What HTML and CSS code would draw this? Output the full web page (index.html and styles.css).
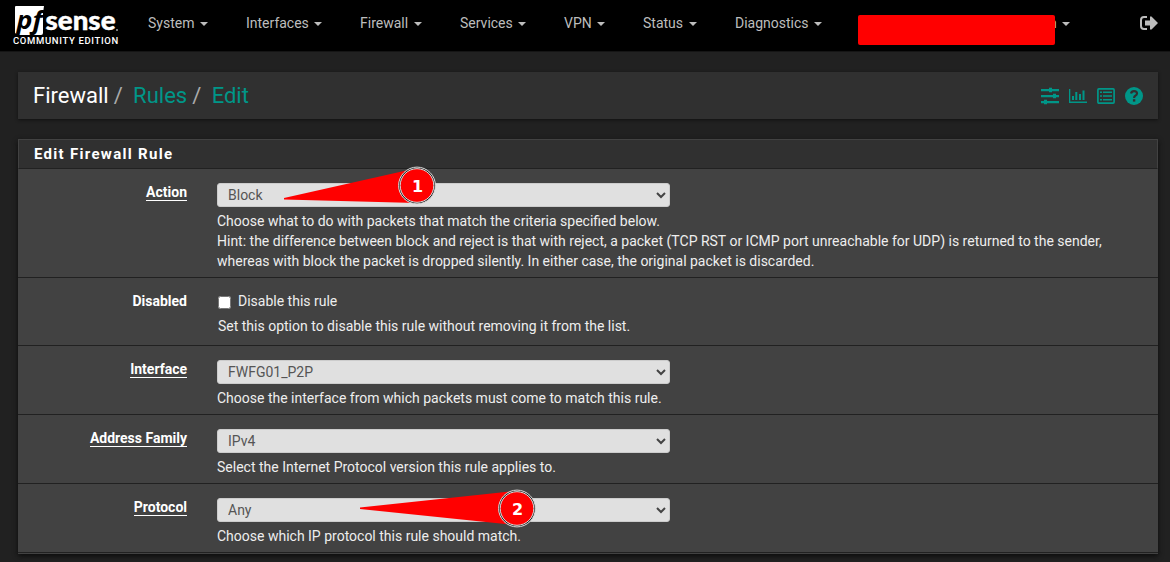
FILE: index.html
```html
<!DOCTYPE html>
<html lang="en">
<head>
<meta charset="utf-8">
<title>Firewall: Rules: Edit</title>
<link rel="stylesheet" href="styles.css">
</head>
<body>
<nav class="navbar">
  <a class="brand">
    <svg class="logo" width="108" height="32" viewBox="0 0 108 32">
      <path d="M4 1H32L31 8V28Q31 30 29 30H6L3 28V2Q3 1 4 1Z" fill="#fff"/>
      <text class="logo-pf" x="4.500" y="24" textLength="26" lengthAdjust="spacingAndGlyphs">pf</text>
      <text class="logo-sense" x="33.500" y="25" textLength="70" lengthAdjust="spacingAndGlyphs">sense</text>
      <rect x="104" y="24" width="2" height="2" fill="#777"/>
    </svg>
    <span class="edition">COMMUNITY EDITION</span>
  </a>
  <ul class="menu">
    <li class="system">System<i class="caret"></i></li>
    <li class="interfaces">Interfaces<i class="caret"></i></li>
    <li class="firewall">Firewall<i class="caret"></i></li>
    <li class="services">Services<i class="caret"></i></li>
    <li class="vpn">VPN<i class="caret"></i></li>
    <li class="status">Status<i class="caret"></i></li>
    <li class="diagnostics">Diagnostics<i class="caret"></i></li>
  </ul>
  <div class="host"><span class="redacted"></span><span class="host-end">n</span><i class="caret"></i></div>
  <svg class="logout" width="18" height="14" viewBox="0 0 18 14">
    <path d="M7 1H4Q1 1 1 4V10Q1 13 4 13H7" fill="none" stroke="#bdbdbd" stroke-width="2"/>
    <path d="M5 4.500H10V.5H11.500L18 7L11.500 13.500H10V9.500H5Z" fill="#bdbdbd"/>
  </svg>
</nav>
<header class="page-header">
  <div class="crumbs"><span>Firewall</span><i>/</i><a>Rules</a><i>/</i><a>Edit</a></div>
  <div class="tools">
    <svg width="18" height="18" viewBox="0 0 18 18" fill="#009688">
      <path d="M0 2H18V4.200H0ZM0 8H18V10.200H0ZM0 14H18V16.200H0Z"/>
      <path d="M8 .7h3v4.600H8zM12 6.700h3v4.600h-3zM3 12.700h3v4.600H3z"/>
    </svg>
    <svg width="18" height="18" viewBox="0 0 18 18" fill="#009688">
      <path d="M0 2H1.300V14.500H18V16H0ZM3 9h2v4H3zM6.300 5h2v8h-2zM10 7h2v6h-2zM13.500 3.500h2V13h-2z"/>
    </svg>
    <svg width="18" height="18" viewBox="0 0 18 18" fill="#009688">
      <rect x=".9" y="1.900" width="16.200" height="14.200" rx="1" fill="none" stroke="#009688" stroke-width="1.700"/>
      <path d="M3 4.500h2v1.600H3zM6 4.500h9v1.600H6zM3 8.200h2v1.600H3zM6 8.200h9v1.600H6zM3 12h2v1.600H3zM6 12h9v1.600H6z"/>
    </svg>
    <svg width="18" height="18" viewBox="0 0 18 18">
      <circle cx="9" cy="9" r="9" fill="#009688"/>
      <path d="M6 6.600Q6.600 4.200 9 4.200Q12 4.200 12 6.600Q12 8 10.300 8.800Q9.100 9.400 9.100 11" fill="none" stroke="#303030" stroke-width="2.200"/>
      <rect x="7.900" y="12.200" width="2.400" height="2.400" fill="#303030"/>
    </svg>
  </div>
</header>
<main class="panel">
  <h2 class="panel-title">Edit Firewall Rule</h2>
  <div class="row">
    <label class="label"><span class="required">Action</span></label>
    <div class="field">
      <div class="select-box">
        <select class="select"><option>Block</option></select>
        <svg class="chevron" width="10" height="7" viewBox="0 0 10 7"><path d="M1 1L5 5L9 1"/></svg>
        <svg class="callout first" width="154" height="40" viewBox="0 0 154 40">
          <path d="M1 33V34.500L133 38L130 4Z" fill="#f00"/>
          <circle cx="134" cy="20.500" r="18.400" fill="#222" stroke="#ddd"/>
          <circle cx="134" cy="20.500" r="16.800" fill="#f00" stroke="#ddd"/>
          <text class="callout-text" x="134.500" y="27">1</text>
        </svg>
      </div>
      <p class="help">Choose what to do with packets that match the criteria specified below.<br>Hint: the difference between block and reject is that with reject, a packet (TCP RST or ICMP port unreachable for UDP) is returned to the sender,<br>whereas with block the packet is dropped silently. In either case, the original packet is discarded.</p>
    </div>
  </div>
  <div class="row check-row">
    <label class="label"><span>Disabled</span></label>
    <div class="field">
      <label class="check"><input class="checkbox" type="checkbox">Disable this rule</label>
      <p class="help">Set this option to disable this rule without removing it from the list.</p>
    </div>
  </div>
  <div class="row">
    <label class="label"><span class="required">Interface</span></label>
    <div class="field">
      <div class="select-box">
        <select class="select"><option>FWFG01_P2P</option></select>
        <svg class="chevron" width="10" height="7" viewBox="0 0 10 7"><path d="M1 1L5 5L9 1"/></svg>
      </div>
      <p class="help">Choose the interface from which packets must come to match this rule.</p>
    </div>
  </div>
  <div class="row">
    <label class="label"><span class="required">Address Family</span></label>
    <div class="field">
      <div class="select-box">
        <select class="select"><option>IPv4</option></select>
        <svg class="chevron" width="10" height="7" viewBox="0 0 10 7"><path d="M1 1L5 5L9 1"/></svg>
      </div>
      <p class="help">Select the Internet Protocol version this rule applies to.</p>
    </div>
  </div>
  <div class="row">
    <label class="label"><span class="required">Protocol</span></label>
    <div class="field">
      <div class="select-box">
        <select class="select"><option>Any</option></select>
        <svg class="chevron" width="10" height="7" viewBox="0 0 10 7"><path d="M1 1L5 5L9 1"/></svg>
        <svg class="callout second" width="178" height="40" viewBox="0 0 178 40">
          <path d="M1 19.500V21L155 37V3Z" fill="#f00"/>
          <circle cx="158" cy="20.500" r="18.400" fill="#222" stroke="#ddd"/>
          <circle cx="158" cy="20.500" r="16.800" fill="#f00" stroke="#ddd"/>
          <text class="callout-text" x="158.500" y="27">2</text>
        </svg>
      </div>
      <p class="help">Choose which IP protocol this rule should match.</p>
    </div>
  </div>
</main>
</body>
</html>
```
FILE: styles.css
```css
* { box-sizing: border-box; }
body {
  margin: 0;
  height: 562px;
  overflow: hidden;
  background: #212121;
  color: #eee;
  font: 14px/20px Roboto, "Liberation Sans", sans-serif;
}
.navbar {
  display: flex;
  align-items: flex-start;
  height: 52px;
  background: #000;
  border-bottom: 1px solid #151515;
  color: #bdbdbd;
}
.brand { display: flex; flex-direction: column; width: 136px; padding: 5px 0 0 12px; }
.logo { display: block; overflow: visible; }
.logo-pf { font: italic bold 25px "Open Sans", sans-serif; fill: #000; }
.logo-sense { font: 900 26px Lato, sans-serif; fill: #fff; stroke: #fff; stroke-width: .4; }
.edition {
  padding-left: 1px;
  font-size: 9.500px;
  font-weight: 500;
  line-height: 8px;
  letter-spacing: .65px;
  white-space: nowrap;
  color: #fff;
}
.menu { display: flex; width: 722px; margin: 0; padding: 13px 0 0 12px; list-style: none; }
.menu li { flex: none; }
.system { width: 98px; }
.interfaces { width: 114px; }
.firewall { width: 100px; }
.services { width: 104px; }
.vpn { width: 79px; }
.status { width: 92px; }
.caret {
  display: inline-block;
  margin-left: 5.500px;
  border: 4px solid transparent;
  border-top-color: #bdbdbd;
  border-bottom: 0;
  vertical-align: middle;
}
.host { display: flex; align-items: center; width: 282px; height: 33px; padding-top: 13px; }
.redacted { position: relative; z-index: 1; width: 197px; height: 30px; margin-top: 14px; background: #f00; border-radius: 2px; }
.host-end { margin-left: -6px; }
.host .caret { margin-top: 2px; }
.logout { margin-top: 16px; }
.page-header {
  display: flex;
  align-items: center;
  justify-content: space-between;
  height: 47px;
  margin: 20px 12px 20px 18px;
  padding: 0 15px;
  background: #303030;
  box-shadow: 0 1px 3px #111;
}
.crumbs { font-size: 22px; line-height: 26px; color: #fff; }
.crumbs a { color: #009688; }
.crumbs i { margin: 0 10.400px 0 5px; font-style: normal; color: #aaa; }
.tools { display: flex; gap: 10px; margin-top: 1px; }
.panel {
  margin: 0 12px 0 18px;
  background: #424242;
  border-bottom: 1px solid #424242;
  box-shadow: 0 2px 5px #0c0c0c;
}
.panel-title {
  height: 30px;
  margin: 0;
  padding-left: 15px;
  border: 1px solid #424242;
  border-bottom-color: #212121;
  background: #303030;
  color: #fff;
  font-size: 15px;
  font-weight: 700;
  line-height: 28px;
  letter-spacing: 1.300px;
}
.row { display: flex; padding-bottom: 6px; border-bottom: 1px solid #212121; }
.label { width: 169px; padding-top: 13px; text-align: right; font-weight: 700; color: #fff; }
.required { display: inline-block; height: 19px; border-bottom: 1px solid #fff; }
.field { flex: 1; padding: 14px 0 0 30px; }
.select-box { position: relative; width: 453px; height: 24px; }
.select {
  display: block;
  width: 100%;
  height: 24px;
  padding: 0 10px;
  appearance: none;
  border: 1px solid #ccc;
  border-radius: 3px;
  background: #e0e0e0;
  color: #555;
  font: inherit;
}
.chevron { position: absolute; right: 4px; top: 9px; fill: none; stroke: #444; stroke-width: 2; }
.help { margin: 4px 0 0; white-space: nowrap; }
.check-row { padding-bottom: 9px; }
.check-row .field { padding: 13px 0 0 31px; }
.check-row .help { margin-top: 5px; }
.check { display: flex; align-items: center; }
.checkbox { width: 13px; height: 13px; margin: 2px 7px 0 0; }
.callout { position: absolute; }
.first { left: 66px; top: -18.500px; }
.second { left: 142px; top: -10.500px; }
.callout-text { font: bold 16px "DejaVu Sans", sans-serif; text-anchor: middle; fill: #fff; }
```
